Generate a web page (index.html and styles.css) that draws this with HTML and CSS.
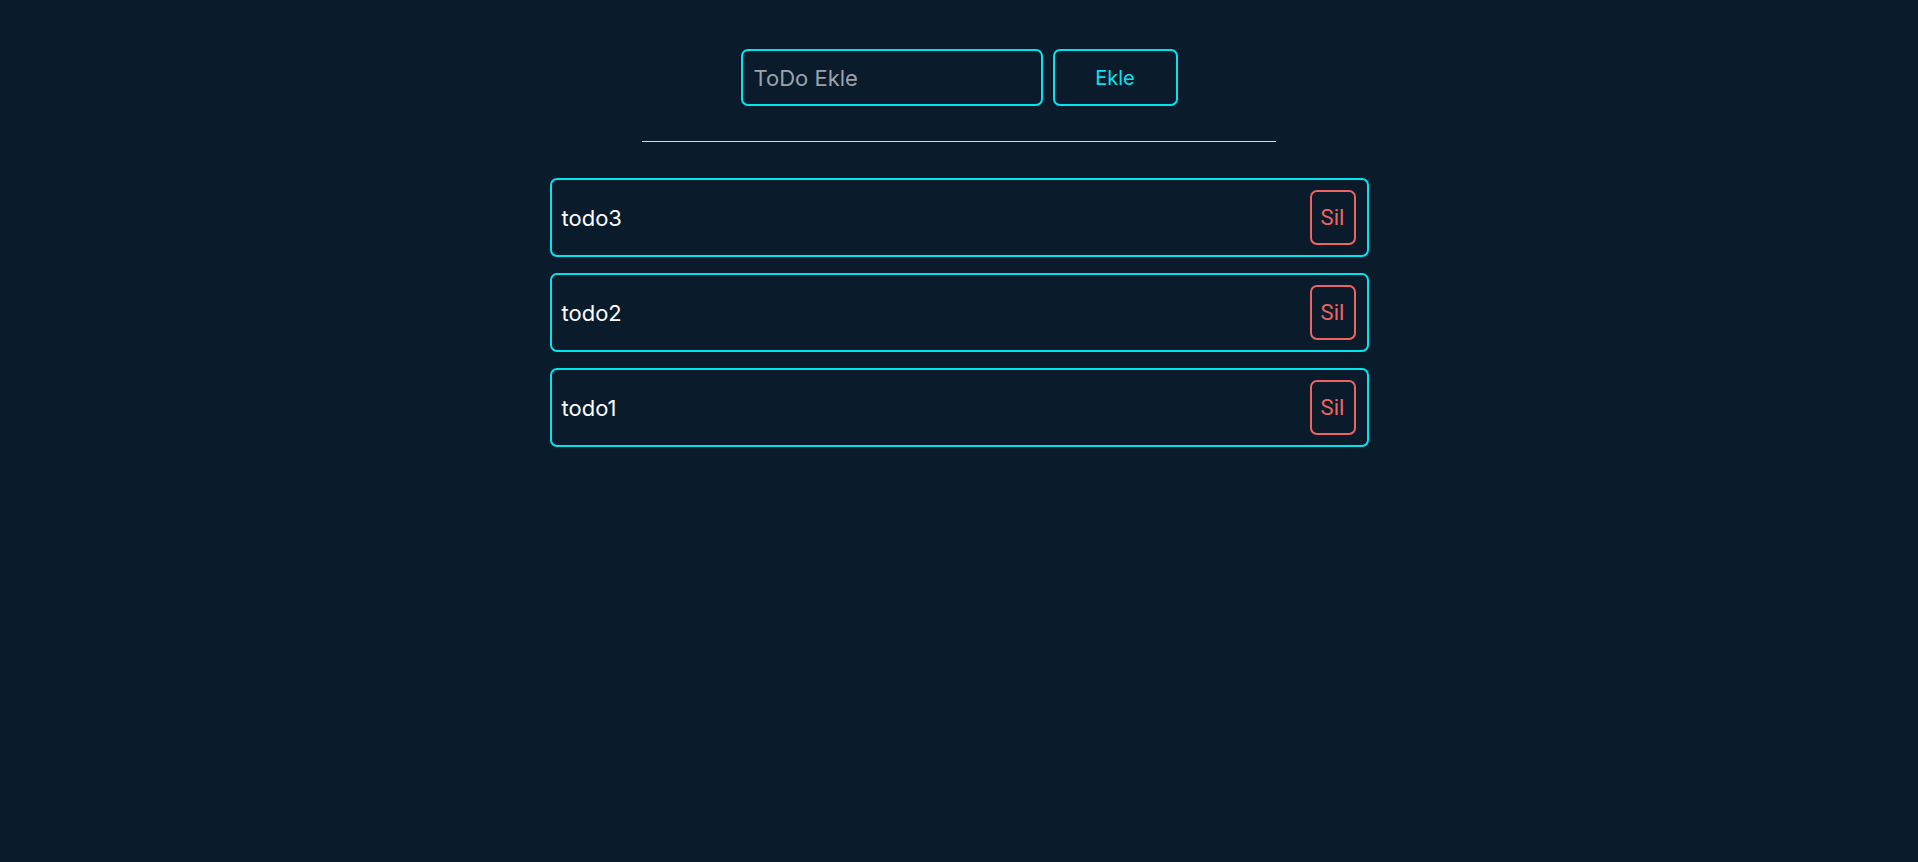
FILE: index.html
```html
<!DOCTYPE html>
<html lang="tr">
<head>
<meta charset="utf-8">
<title>ToDo</title>
<link rel="stylesheet" href="styles.css">
</head>
<body>
<main class="app">
  <form class="add-form">
    <input class="add-input" type="text" placeholder="ToDo Ekle">
    <button class="add-btn" type="button">Ekle</button>
  </form>
  <hr class="divider">
  <ul class="todo-list">
    <li class="todo-item"><span class="todo-text">todo3</span><button class="del-btn" type="button">Sil</button></li>
    <li class="todo-item"><span class="todo-text">todo2</span><button class="del-btn" type="button">Sil</button></li>
    <li class="todo-item"><span class="todo-text">todo1</span><button class="del-btn" type="button">Sil</button></li>
  </ul>
</main>
</body>
</html>
```
FILE: styles.css
```css
* { box-sizing: border-box; }
html, body {
  margin: 0;
  height: 100%;
  background: #0a1c2b;
}
body {
  font-family: "Inter", "Noto Sans", sans-serif;
  color: #ffffff;
}
.app {
  display: flex;
  flex-direction: column;
  align-items: center;
  padding-top: 49px;
}
.add-form {
  display: flex;
  gap: 10px;
  margin: 0;
}
.add-input {
  width: 302px;
  height: 57px;
  background: transparent;
  border: 2px solid #00e5ef;
  border-radius: 7px;
  padding: 0 11px;
  font-family: "Inter", sans-serif;
  font-size: 22px;
  color: #ffffff;
  outline: none;
}
.add-input::placeholder {
  color: #9aa3ab;
}
.add-btn {
  width: 125px;
  height: 57px;
  background: transparent;
  border: 2px solid #00e5ef;
  border-radius: 7px;
  color: #00e5ef;
  font-family: "Inter", sans-serif;
  font-size: 20px;
  cursor: pointer;
}
.divider {
  width: 634px;
  height: 1px;
  border: 0;
  background: #d8dde0;
  margin: 35px 0 0;
}
.todo-list {
  list-style: none;
  margin: 36px 0 0;
  padding: 0;
  display: flex;
  flex-direction: column;
  gap: 16px;
}
.todo-item {
  width: 819px;
  height: 79px;
  border: 2px solid #00e5ef;
  border-radius: 7px;
  display: flex;
  align-items: center;
  justify-content: space-between;
  padding: 0 11px 0 10px;
}
.todo-text {
  font-size: 22px;
  color: #ffffff;
}
.del-btn {
  width: 46px;
  height: 55px;
  background: transparent;
  border: 2px solid #ef6461;
  border-radius: 7px;
  color: #ef6461;
  font-family: "Roboto", sans-serif;
  font-size: 22px;
  padding: 0;
  cursor: pointer;
}
```
